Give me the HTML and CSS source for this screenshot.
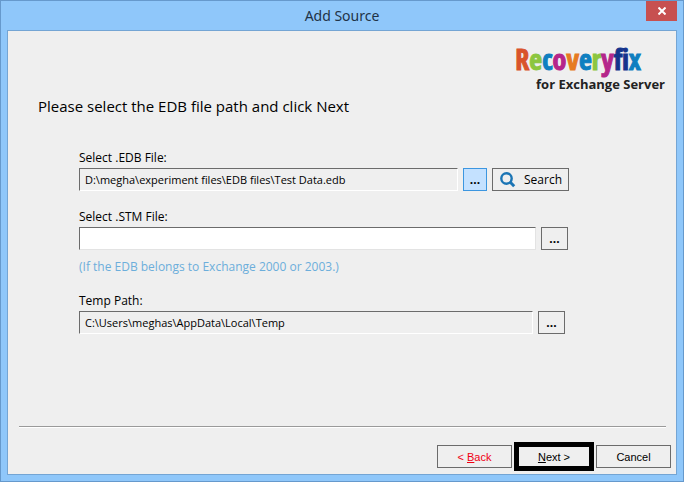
FILE: index.html
```html
<!DOCTYPE html>
<html lang="en">
<head>
    <meta charset="UTF-8">
    <meta name="viewport" content="width=device-width, initial-scale=1.0">
    <title>Add Source</title>
    <link rel="stylesheet" href="styles.css">
</head>
<body>
    <div class="window">
        <header class="titlebar">
            <h1>Add Source</h1>
            <button type="button" class="close-btn" aria-label="Close">
                <svg width="8" height="8" viewBox="0 0 8 8"><path d="M0.5 0.5L7.5 7.5M7.5 0.5L0.5 7.5" stroke="#fff" stroke-width="2"/></svg>
            </button>
        </header>

        <form class="content">
            <div class="logo">
                <div class="logo-name"><span class="orange-red">R</span><span class="green">e</span><span class="blue">c</span><span class="magenta">o</span><span class="orange">v</span><span class="blue">e</span><span class="green">r</span><span class="magenta">y</span><span class="navy">f</span><span class="orange">i</span><span class="blue">x</span></div>
                <div class="logo-product">for Exchange Server</div>
            </div>

            <h2>Please select the EDB file path and click Next</h2>

            <div class="fields">
                <label for="edb">Select .EDB File:</label>
                <div class="row">
                    <input type="text" id="edb" class="path" value="D:\megha\experiment files\EDB files\Test Data.edb" readonly>
                    <button type="button" class="browse active">...</button>
                    <button type="button" class="search">
                        <svg width="16" height="16" viewBox="0 0 16 16" fill="none" stroke="#1b75b5"><circle cx="6.5" cy="6.5" r="5.2" stroke-width="2.4"/><path d="M10.3 10.3L14.2 14.2" stroke-width="3"/></svg>
                        Search
                    </button>
                </div>

                <label for="stm">Select .STM File:</label>
                <div class="row stm-row">
                    <input type="text" id="stm" class="path editable">
                    <button type="button" class="browse">...</button>
                </div>
                <p class="hint">(If the EDB belongs to Exchange 2000 or 2003.)</p>

                <label for="temp">Temp Path:</label>
                <div class="row temp-row">
                    <input type="text" id="temp" class="path" value="C:\Users\meghas\AppData\Local\Temp" readonly>
                    <button type="button" class="browse">...</button>
                </div>
            </div>

            <hr>
            <footer class="actions">
                <button type="button" class="back">&lt; <u>B</u>ack</button>
                <button type="submit" class="next"><u>N</u>ext &gt;</button>
                <button type="button">Cancel</button>
            </footer>
        </form>
    </div>
</body>
</html>
```
FILE: styles.css
```css
* {
    box-sizing: border-box;
}

body {
    margin: 0;
    font-family: "Open Sans", "Noto Sans", sans-serif;
    font-size: 12px;
    color: #000;
}

.window {
    display: flex;
    flex-direction: column;
    min-height: 100vh;
    padding: 0 6px 6px;
    background-color: #8fc7fa;
    border: 1px solid #6699cc;
}

button {
    padding: 0;
    font-family: inherit;
    color: #000;
    background-color: #efefef;
    border: 1px solid #6b6b6b;
}

/* Title bar */
.titlebar {
    position: relative;
    height: 29px;
}

h1 {
    margin: 0;
    font-family: "Noto Sans", sans-serif;
    font-size: 14px;
    font-weight: normal;
    line-height: 29px;
    text-align: center;
    color: #1f3347;
}

.close-btn {
    position: absolute;
    top: 0;
    right: 0;
    display: flex;
    align-items: center;
    justify-content: center;
    width: 31px;
    height: 20px;
    background-color: #c75050;
    border: none;
}

/* Dialog body */
.content {
    display: flex;
    flex-direction: column;
    flex: 1;
    background-color: #efefef;
    border: 1px solid #74a5d4;
}

/* Logo */
.logo {
    align-self: flex-end;
    margin: 12px 11px 0 0;
}

.logo-name {
    padding-right: 24px;
    font-family: "Open Sans Condensed", "Roboto Condensed", sans-serif;
    font-size: 28px;
    font-weight: bold;
    line-height: 32px;
    text-align: right;
    -webkit-text-stroke: 1px;
}

.logo-product {
    font-size: 13px;
    font-weight: bold;
    line-height: 18px;
    text-align: right;
    color: #222;
}

.orange-red { color: #d9532c; }
.green { color: #8cc63f; }
.blue { color: #0f7fc0; }
.magenta { color: #b5268a; }
.orange { color: #e67a22; }
.navy { color: #14348c; }

h2 {
    margin: 3px 0 0 30px;
    font-size: 15px;
    font-weight: normal;
    line-height: 20px;
}

/* Path fields */
.fields {
    margin: 32px 107px 0 71px;
}

label {
    display: block;
    line-height: 20px;
}

.row {
    display: flex;
    gap: 5px;
    margin-bottom: 16px;
}

.path {
    flex: 1;
    min-width: 0;
    height: 23px;
    padding: 0 5px;
    font-family: inherit;
    font-size: 11px;
    background-color: #efefef;
    border: 1px solid #6b6b6b;
    border-right-color: #fff;
    border-bottom-color: #fff;
    outline: none;
}

.editable {
    background-color: #fff;
    border-right-color: #e3e3e3;
    border-bottom-color: #e3e3e3;
}

.browse {
    width: 27px;
    height: 23px;
    font-size: 12px;
    font-weight: bold;
}

.browse.active {
    width: 24px;
    background-color: #c4e1ff;
    border-color: #3c96e0;
}

.search {
    display: flex;
    align-items: center;
    gap: 8px;
    width: 77px;
    height: 23px;
    padding-left: 7px;
    font-size: 12px;
}

.stm-row {
    margin: 0 1px 7px 0;
}

.hint {
    margin: 0 0 14px;
    line-height: 20px;
    color: #6caedb;
}

.temp-row {
    margin: 0 4px 0 0;
}

/* Bottom buttons */
hr {
    align-self: stretch;
    height: 2px;
    margin: auto 10px 0 11px;
    background-color: #fff;
    border: none;
    border-top: 1px solid #9a9a9a;
}

.actions {
    display: flex;
    align-items: center;
    justify-content: flex-end;
    gap: 2px;
    padding: 14px 5px 3px;
}

.actions button {
    width: 75px;
    height: 23px;
    font-family: "Liberation Sans", Arial, sans-serif;
    font-size: 11px;
}

.actions .back {
    color: #f00014;
}

.actions .next {
    width: 80px;
    height: 29px;
    border: 5px solid #000;
}
```
